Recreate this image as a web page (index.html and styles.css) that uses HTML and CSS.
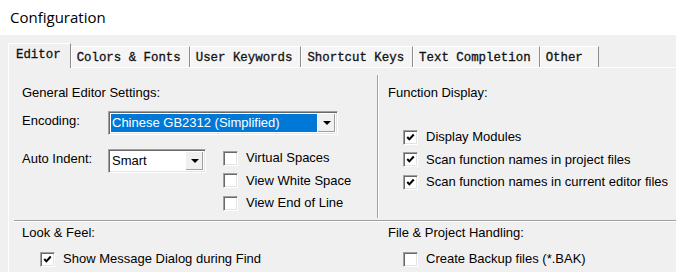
FILE: index.html
```html
<!DOCTYPE html>
<html lang="en">
<head>
    <meta charset="UTF-8">
    <meta name="viewport" content="width=device-width, initial-scale=1.0">
    <title>Configuration</title>
    <link rel="stylesheet" href="styles.css">
</head>
<body>
    <div class="titlebar">Configuration</div>

    <div class="tabs">
        <div class="tab active">Editor</div>
        <div class="tab">Colors &amp; Fonts</div>
        <div class="tab">User Keywords</div>
        <div class="tab">Shortcut Keys</div>
        <div class="tab">Text Completion</div>
        <div class="tab other">Other</div>
    </div>

    <div class="panel">
        <div class="section top">
            <div class="col left">
                <div class="heading">General Editor Settings:</div>
                <div class="row">
                    <span class="field-label">Encoding:</span>
                    <div class="combo wide">
                        <span class="value selected">Chinese GB2312 (Simplified)</span>
                        <span class="drop"><i></i></span>
                    </div>
                </div>
                <div class="row indent">
                    <span class="field-label">Auto Indent:</span>
                    <div class="combo narrow">
                        <span class="value">Smart</span>
                        <span class="drop"><i></i></span>
                    </div>
                    <div class="checks side">
                        <div class="check"><span class="box"></span>Virtual Spaces</div>
                        <div class="check"><span class="box"></span>View White Space</div>
                        <div class="check"><span class="box"></span>View End of Line</div>
                    </div>
                </div>
            </div>
            <div class="col right">
                <div class="heading">Function Display:</div>
                <div class="checks func">
                    <div class="check"><span class="box"><svg viewBox="0 0 14 14"><path d="M3.5 6.5 L5.8 9 L10.5 3.8"/></svg></span>Display Modules</div>
                    <div class="check"><span class="box"><svg viewBox="0 0 14 14"><path d="M3.5 6.5 L5.8 9 L10.5 3.8"/></svg></span>Scan function names in project files</div>
                    <div class="check"><span class="box"><svg viewBox="0 0 14 14"><path d="M3.5 6.5 L5.8 9 L10.5 3.8"/></svg></span>Scan function names in current editor files</div>
                </div>
            </div>
        </div>

        <div class="divider"></div>

        <div class="section bottom">
            <div class="col left">
                <div class="heading">Look &amp; Feel:</div>
                <div class="check single"><span class="box"><svg viewBox="0 0 14 14"><path d="M3.5 6.5 L5.8 9 L10.5 3.8"/></svg></span>Show Message Dialog during Find</div>
            </div>
            <div class="col right">
                <div class="heading">File &amp; Project Handling:</div>
                <div class="check single"><span class="box"></span>Create Backup files (*.BAK)</div>
            </div>
        </div>
    </div>
</body>
</html>
```

FILE: styles.css
```css
body { margin: 0; width: 676px; height: 272px; overflow: hidden; background: #f0f0f0; font-family: "Liberation Sans", Arial, sans-serif; font-size: 13px; color: #000; }

.titlebar { height: 35px; line-height: 35px; padding-left: 10px; background: #fff; font-family: "Open Sans", sans-serif; font-size: 15px; }

/* tab strip */
.tabs { display: flex; align-items: flex-end; height: 32px; padding: 8px 0 0 8px; box-sizing: border-box; }
.tab { height: 21px; line-height: 22px; box-sizing: border-box; padding: 0 8px 0 5px; background: #f5f5f5; border-top: 1px solid #fff; border-left: 1px solid #fff; border-right: 1px solid #8c8c8c; font-family: "Liberation Mono", monospace; font-size: 12.4px; color: #111; white-space: nowrap; -webkit-text-stroke: 0.3px #111; }
.tab.active { position: relative; z-index: 1; height: 25px; line-height: 22px; margin-bottom: -1px; padding: 0 9px 0 7px; background: #f0f0f0; }
.tab.other { min-width: 59px; }

/* panel */
.panel { margin-left: 8px; border-top: 1px solid #fff; border-left: 1px solid #fff; height: 204px; }
.section { display: grid; grid-template-columns: 368px 1fr; }
.section.top { margin-top: 7px; height: 143px; }
.col.left { padding-left: 13px; }
.top .col.right { border-left: 1px solid #a0a0a0; box-shadow: inset 1px 0 0 #fff; padding-left: 10px; }
.bottom .col.right { padding-left: 11px; }
.heading { line-height: 16px; }
.top .heading { padding-top: 10px; }

.row { display: flex; align-items: flex-start; margin-top: 10px; }
.row.indent { margin-top: 14px; }
.field-label { width: 86px; padding-top: 2px; line-height: 16px; }

/* combo boxes */
.combo { display: flex; height: 24px; box-sizing: border-box; padding: 2px; background: #fff; border-top: 1px solid #a0a0a0; border-left: 1px solid #a0a0a0; border-bottom: 1px solid #fff; border-right: 1px solid #fff; box-shadow: inset 1px 1px 0 #696969, inset -1px -1px 0 #e3e3e3; }
.combo.wide { width: 230px; }
.combo.narrow { width: 98px; }
.value { flex: 1; line-height: 18px; padding-left: 1px; white-space: nowrap; }
.value.selected { background: #0078d7; color: #fff; }
.drop { width: 17px; display: flex; align-items: center; justify-content: center; background: #f0f0f0; border-left: 1px solid #fff; box-shadow: inset -1px -1px 0 #a0a0a0; }
.drop i { width: 0; height: 0; border-left: 4px solid transparent; border-right: 4px solid transparent; border-top: 4px solid #000; }

/* check boxes */
.checks.side { margin-left: 17px; margin-top: 1px; }
.checks.func { margin-top: 28px; padding-left: 15px; }
.check { display: flex; align-items: center; gap: 8px; line-height: 16px; margin-bottom: 6.5px; white-space: nowrap; }
.check.single { margin-top: 10px; }
.left .check.single { padding-left: 18px; }
.right .check.single { padding-left: 15px; }
.box { width: 15px; height: 15px; box-sizing: border-box; background: #fff; border-top: 1px solid #a0a0a0; border-left: 1px solid #a0a0a0; border-bottom: 1px solid #fff; border-right: 1px solid #fff; box-shadow: inset 1px 1px 0 #696969, inset -1px -1px 0 #e3e3e3; display: flex; }
.box svg { width: 13px; height: 13px; }
.box path { fill: none; stroke: #000; stroke-width: 2.2; }

.divider { margin: 2px 0 0 5px; border-top: 1px solid #a0a0a0; border-bottom: 1px solid #fff; }
.bottom .heading { padding-top: 3px; }
```
